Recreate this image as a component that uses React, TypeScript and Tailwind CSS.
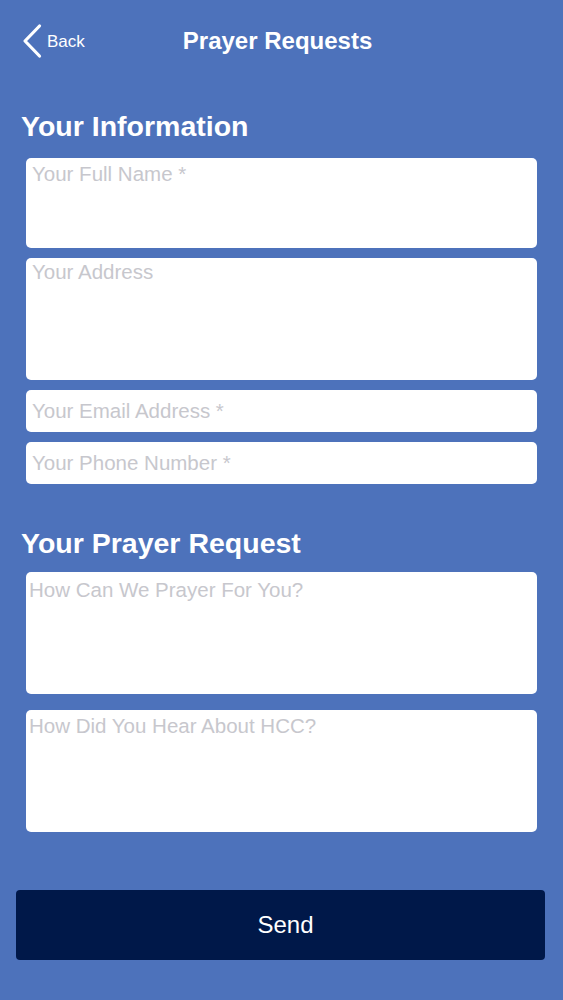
import React from 'react';

interface FieldProps {
  placeholder: string;
  multiline?: boolean;
  heightClass: string;
  padClass: string;
}

const Field: React.FC<FieldProps> = ({ placeholder, multiline, heightClass, padClass }) => {
  const base = `w-full rounded-[5px] bg-white text-[20.5px] leading-[24px] text-[#333] placeholder:text-[#c7c7cd] outline-none ${heightClass} ${padClass}`;
  if (multiline) {
    return <textarea className={`${base} resize-none block`} placeholder={placeholder} />;
  }
  return <input className={`${base} block`} placeholder={placeholder} />;
};

const App: React.FC = () => {
  return (
    <div className="min-h-[1000px] w-full bg-[#4d72bb] font-['Liberation_Sans',Arial,sans-serif] text-white">
      {/* Nav bar */}
      <div className="flex h-[81px] items-center pl-[22px]">
        <button className="flex items-center gap-[5px]">
          <svg width="20" height="36" viewBox="0 0 20 36" fill="none">
            <path d="M17.5 3 L3 18 L17.5 33" stroke="white" strokeWidth="3.2" strokeLinecap="round" strokeLinejoin="round" />
          </svg>
          <span className="mt-[2px] text-[17px] text-white">Back</span>
        </button>
        <h1 className="ml-[98px] text-[24px] font-bold">Prayer Requests</h1>
      </div>

      {/* Your Information */}
      <div className="mt-[29px] px-[26px]">
        <h2 className="-ml-[5px] text-[28.5px] font-bold leading-[32px]">Your Information</h2>
        <div className="mt-[16px] flex flex-col gap-[10px]">
          <Field placeholder="Your Full Name *" multiline heightClass="h-[90px]" padClass="pl-[6px] pt-[4px]" />
          <Field placeholder="Your Address" multiline heightClass="h-[122px]" padClass="pl-[6px] pt-[2px]" />
          <Field placeholder="Your Email Address *" heightClass="h-[42px]" padClass="pl-[6px]" />
          <Field placeholder="Your Phone Number *" heightClass="h-[42px]" padClass="pl-[6px]" />
        </div>
      </div>

      {/* Your Prayer Request */}
      <div className="mt-[43px] px-[26px]">
        <h2 className="-ml-[5px] text-[28.5px] font-bold leading-[32px]">Your Prayer Request</h2>
        <div className="mt-[13px] flex flex-col gap-[16px]">
          <Field placeholder="How Can We Prayer For You?" multiline heightClass="h-[122px]" padClass="pl-[3px] pt-[6px]" />
          <Field placeholder="How Did You Hear About HCC?" multiline heightClass="h-[122px]" padClass="pl-[3px] pt-[4px]" />
        </div>
      </div>

      {/* Send */}
      <div className="mt-[58px] px-[16px]">
        <button className="flex h-[70px] w-[529px] items-center justify-center rounded-[4px] bg-[#001849] pl-[10px] text-[24px] text-white">
          Send
        </button>
      </div>
    </div>
  );
};

export default App;
